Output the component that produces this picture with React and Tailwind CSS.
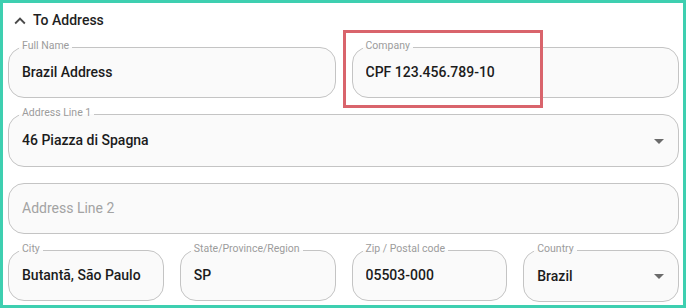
import React from 'react';

function DropArrow() {
  return (
    <svg width="24" height="24" viewBox="0 0 24 24" className="shrink-0 fill-[#6b6b6b]">
      <path d="M7 10l5 5 5-5z" />
    </svg>
  );
}

function Field({ label, value, placeholder, select, className = '' }) {
  return (
    <div
      className={`relative flex items-center rounded-[16px] border border-[#c4c4c4] bg-[#fafafa] pl-[13px] pr-[7px] ${
        select ? 'h-[53px]' : 'h-[51px]'
      } ${className}`}
    >
      {label && (
        <span className="absolute left-[10px] -top-[9px] px-[3px] text-[10.5px] leading-[13px] text-[#9c9c9c] bg-[linear-gradient(to_bottom,#ffffff_8px,#fafafa_8px)] whitespace-nowrap">
          {label}
        </span>
      )}
      {value ? (
        <span className="flex-1 truncate text-[14px] font-medium text-[#1c1c1c]">{value}</span>
      ) : (
        <span className="flex-1 truncate text-[14px] text-[#a3a3a3]">{placeholder}</span>
      )}
      {select && <DropArrow />}
    </div>
  );
}

export default function App() {
  return (
    <div
      className="w-[686px] h-[308px] border-[3px] border-[#3ecfb0] bg-white pl-[5px] pr-[4px] overflow-hidden"
      style={{ fontFamily: 'Roboto, "Noto Sans", sans-serif' }}
    >
      {/* Header */}
      <div className="h-[35px] flex items-center">
        <svg width="22" height="22" viewBox="0 0 24 24" className="ml-[1px] fill-[#4a4a4a]">
          <path d="M12 8l-6 6 1.41 1.41L12 10.83l4.59 4.58L18 14z" />
        </svg>
        <span className="ml-[2px] text-[14px] font-medium text-[#1f1f1f]">To Address</span>
      </div>

      {/* Fields */}
      <div className="mt-[9px] flex flex-col gap-[16px]">
        <div className="grid grid-cols-2 gap-x-[16px]">
          <Field label="Full Name" value="Brazil Address" />
          <div className="relative">
            <Field label="Company" value="CPF 123.456.789-10" />
            <div className="absolute -left-[9px] -top-[17px] w-[200px] h-[78px] border-[3px] border-[#d9646c] pointer-events-none" />
          </div>
        </div>

        <Field label="Address Line 1" value="46 Piazza di Spagna" select />

        <Field placeholder="Address Line 2" />

        <div className="grid grid-cols-4 gap-x-[16px] items-start">
          <Field label="City" value="Butantã, São Paulo" />
          <Field label="State/Province/Region" value="SP" />
          <Field label="Zip / Postal code" value="05503-000" />
          <Field label="Country" value="Brazil" select className="!h-[52px]" />
        </div>
      </div>
    </div>
  );
}
